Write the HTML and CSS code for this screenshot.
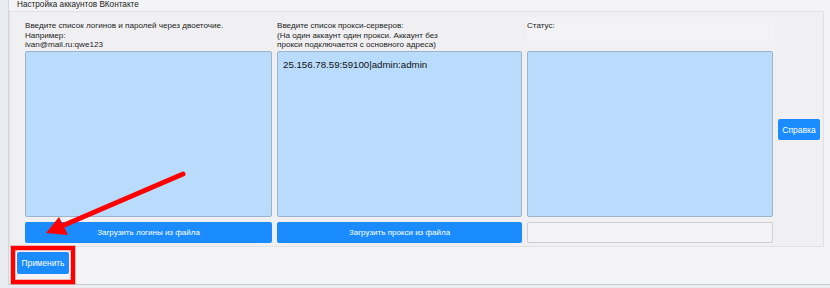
FILE: index.html
```html
<!DOCTYPE html>
<html lang="ru">
<head>
<meta charset="utf-8">
<title>Настройка аккаунтов ВКонтакте</title>
<link rel="stylesheet" href="styles.css">
</head>
<body>
<div class="window">
  <div class="title">Настройка аккаунтов ВКонтакте</div>
  <div class="group">
    <div class="grid">
      <div class="label">Введите список логинов и паролей через двоеточие.<br>Например:<br>ivan@mail.ru:qwe123</div>
      <div class="label">Введите список прокси-серверов:<br>(На один аккаунт один прокси. Аккаунт без<br>прокси подключается с основного адреса)</div>
      <div class="label status-label">Статус:</div>
      <div class="side"><button class="btn help">Справка</button></div>
      <div class="box"></div>
      <div class="box proxy">25.156.78.59:59100|admin:admin</div>
      <div class="box"></div>
      <button class="btn load">Загрузить логины из файла</button>
      <button class="btn load">Загрузить прокси из файла</button>
      <div class="empty"></div>
    </div>
  </div>
  <div class="footer"><button class="btn apply">Применить</button></div>
</div>
<svg class="annot" width="830" height="288" viewBox="0 0 830 288">
  <line x1="183" y1="174" x2="62" y2="226" stroke="#f00" stroke-width="5" stroke-linecap="round"/>
  <polygon points="46,233 59,217 68,235" fill="#f00"/>
  <rect x="13" y="248" width="60" height="34" fill="none" stroke="#f00" stroke-width="4.5"/>
</svg>
</body>
</html>
```
FILE: styles.css
```css
html, body {
  margin: 0;
  padding: 0;
}
body {
  width: 830px;
  height: 288px;
  overflow: hidden;
  background: #e9ecf1;
  font-family: "Liberation Sans", Arial, sans-serif;
  position: relative;
}
.window {
  margin-left: 8px;
  border-left: 1px solid #d3d6db;
  border-bottom: 1px solid #c9c9cc;
  height: 285px;
  box-sizing: border-box;
  background: #f4f4f6;
  display: flex;
  flex-direction: column;
}
.title {
  height: 11px;
  padding-left: 8px;
  font-size: 8.2px;
  line-height: 9px;
  color: #222;
}
.group {
  margin-right: 6px;
  border: 1px solid #e1e1e4;
  background: #f0f0f2;
  padding: 5px 0 8px 15px;
}
.grid {
  display: grid;
  grid-template-columns: 247px 245px 246px 42px;
  grid-template-rows: 34px 166px 21px;
  column-gap: 5px;
  row-gap: 0;
}
.label {
  font-size: 8.1px;
  line-height: 9.5px;
  color: #222;
  padding-top: 4px;
}
.status-label {
  background: #f3f3f5;
  margin-right: -2px;
  margin-bottom: 4px;
  padding-left: 0;
}
.side {
  grid-row: 1 / 4;
  grid-column: 4;
  display: flex;
  align-items: center;
}
.box {
  background: #b9dcfd;
  border: 1px solid #9cb3c9;
  border-radius: 2px;
  box-sizing: border-box;
}
.proxy {
  padding: 7px 5px;
  font-size: 9.7px;
  line-height: 12px;
  color: #111;
}
.btn {
  font-family: "Liberation Sans", Arial, sans-serif;
  background: #1a8cff;
  color: #fff;
  border: none;
  border-radius: 2px;
  padding: 0;
  font-size: 8px;
  margin: 0;
}
.load {
  margin-top: 5px;
  height: 21px;
}
.empty {
  margin-top: 5px;
  height: 21px;
  box-sizing: border-box;
  border: 1px solid #cfcfd3;
  border-radius: 2px;
  background: #f3f3f5;
}
.help {
  width: 43px;
  height: 21px;
  font-size: 8.5px;
  margin-top: 4px;
}
.footer {
  padding: 5px 0 0 8px;
}
.apply {
  width: 52px;
  height: 22px;
  font-size: 8.3px;
}
.annot {
  position: absolute;
  left: 0;
  top: 0;
  pointer-events: none;
}
```
